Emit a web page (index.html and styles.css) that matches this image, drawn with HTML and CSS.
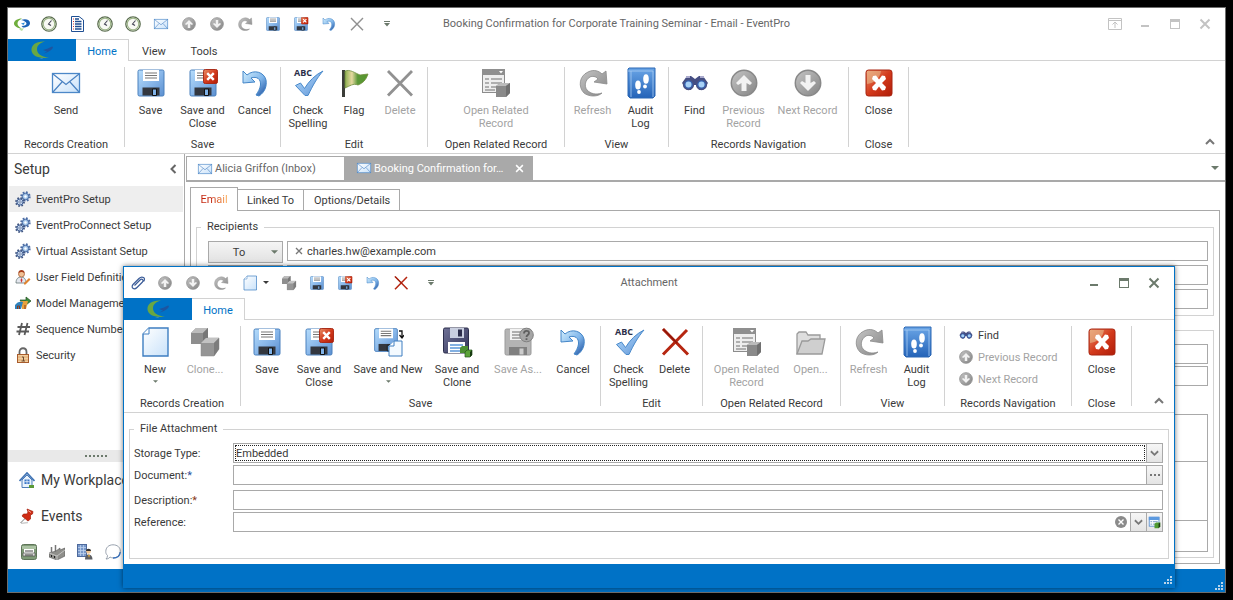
FILE: index.html
```
<!DOCTYPE html>
<html lang="en">
<head>
<meta charset="utf-8">
<title>EventPro</title>
<link rel="stylesheet" href="styles.css">
</head>
<body>
<svg class="sprite" width="0" height="0" aria-hidden="true">
  <defs>
    <linearGradient id="gBlue" x1="0" y1="0" x2="1" y2="1"><stop offset="0" stop-color="#b5dcfb"/><stop offset=".5" stop-color="#8ab8ea"/><stop offset="1" stop-color="#5b8fd0"/></linearGradient>
    <linearGradient id="gPale" x1="0" y1="0" x2="1" y2="1"><stop offset="0" stop-color="#ffffff"/><stop offset="1" stop-color="#c9e2fa"/></linearGradient>
    <linearGradient id="gBook" x1="0" y1="0" x2="0" y2="1"><stop offset="0" stop-color="#6aa5e6"/><stop offset="1" stop-color="#2463b8"/></linearGradient>
    <linearGradient id="gRed" x1="0" y1="0" x2="1" y2="1"><stop offset="0" stop-color="#e9926a"/><stop offset=".5" stop-color="#d33a1c"/><stop offset="1" stop-color="#b01c08"/></linearGradient>
    <linearGradient id="gGray" x1="0" y1="0" x2="1" y2="1"><stop offset="0" stop-color="#c4c4c4"/><stop offset="1" stop-color="#858585"/></linearGradient>
    <linearGradient id="gUndo" x1="0" y1="0" x2="1" y2="1"><stop offset="0" stop-color="#d2eefd"/><stop offset=".55" stop-color="#7fb5ea"/><stop offset="1" stop-color="#1a4c9c"/></linearGradient>
    <linearGradient id="gFlag" x1="0" y1="0" x2="1" y2="0"><stop offset="0" stop-color="#8cae4f"/><stop offset=".3" stop-color="#e6d9a0"/><stop offset=".55" stop-color="#5c9838"/><stop offset="1" stop-color="#55962c"/></linearGradient>
    <linearGradient id="gDark" x1="0" y1="0" x2="1" y2="1"><stop offset="0" stop-color="#6f7196"/><stop offset="1" stop-color="#33355a"/></linearGradient>
  </defs>
  <symbol id="i-logo" viewBox="0 0 24 18"><path d="M15 .5C6 0 1 4 1.500 9.500S9 18 19 16.500C12 16 7 13 7 8.500S10 2 15 .5Z" fill="#69a743"/><path d="M13 9 18 7.500C20 6.500 21 5.500 22.500 5.500 24 7 21 10.500 13.500 12.500L17 10.500Z" fill="#1d55a0"/><path d="M9 17.500 14 16.500 12 18Z" fill="#3d8db8"/></symbol>
  <symbol id="i-globe" viewBox="0 0 16 16"><path d="M8 2.500C3 2.500 0 5 0 7.500S3 12 8 13C5 11 3.500 9.500 3.500 7.500S5 4 8 2.500Z" fill="#6fae3d"/><path d="M7 4C12 2 16 4 16 7s-3 4.500-7 4.500L7.500 10C11 10 12.500 9 12.500 7.500S10 4.500 7 4Z" fill="#1a62b5"/><path d="M7 7.500 11 6.500 9.500 9Z" fill="#2c8bd6"/><path d="M5 13.500 10 12 8 15Z" fill="#b8dba0"/></symbol>
  <symbol id="i-clock" viewBox="0 0 16 16"><circle cx="8" cy="8" r="7.200" fill="#fff" stroke="#5b6d50" stroke-width="1.300"/><circle cx="8" cy="8" r="5.800" fill="#f8f9f4" stroke="#9db588" stroke-width="1.200"/><path d="M10.500 4.500 7.500 8l2.500 1.500" fill="none" stroke="#445" stroke-width="1.100"/></symbol>
  <symbol id="i-list" viewBox="0 0 16 16"><path d="M2.500.5H10L14.500 4v11.500h-12Z" fill="#fff" stroke="#1f4f93"/><path d="M4 3h1M4 5.500h1M4 8h1M4 10.500h1M4 13h1" stroke="#c33"/><path d="M6 3h4M6 5.500h6.500M6 8h6.500M6 10.500h6.500M6 13h6.500" stroke="#1d4c91" stroke-width="1.300"/></symbol>
  <symbol id="i-mail" viewBox="0 0 32 24"><rect x="2.500" y="2.500" width="27" height="19" fill="url(#gPale)" stroke="#4c88c8" stroke-width="1.300"/><path d="M3 3 16 13.500 29 3M3 21 12 11M29 21 20 11" fill="none" stroke="#4a82c2" stroke-width="1.200"/></symbol>
  <symbol id="i-up" viewBox="0 0 32 32"><circle cx="16" cy="16" r="12.700" fill="url(#gGray)" stroke="#888" stroke-width="1.500"/><path d="M16 8 24 16 22 18l-3.500-2v8h-5v-8L10 18 8 16Z" fill="#f2f2f2"/></symbol>
  <symbol id="i-down" viewBox="0 0 32 32"><circle cx="16" cy="16" r="12.700" fill="url(#gGray)" stroke="#888" stroke-width="1.500"/><path d="M16 24 8 16 10 14l3.500 2V8h5v8l3.500-2 2 2Z" fill="#f2f2f2"/></symbol>
  <symbol id="i-refresh" viewBox="0 0 32 32"><path d="M25 26C21 30 12 30 7 26 1 20 2 9 11 5c6-3 11-1 14 2l4-3 1 13-13-2 4-3c-2-3-6-3-8-2-5 3-6 9-3 13 4 4 9 5 15 3Z" fill="url(#gGray)" stroke="#8a8a8a" stroke-width=".8"/></symbol>
  <symbol id="i-save" viewBox="0 0 32 32"><rect x="3" y="3" width="26" height="26" rx="1.500" fill="url(#gBlue)" stroke="#4a80bd"/><path d="M8 3h16v11H8Z" fill="#fff"/><path d="M10 6h12M10 8.500h12M10 11h12" stroke="#777" stroke-width="1.200"/><path d="M7.500 20.500h17v8h-17Z" fill="#33373f"/><path d="M17.500 22h4v6.500h-4Z" fill="#7fb2e8" stroke="#111"/></symbol>
  <symbol id="i-badge" viewBox="0 0 16 16"><rect x=".5" y=".5" width="15" height="15" rx="2" fill="url(#gRed)" stroke="#a82410"/><path d="m4.500 4.500 7 7m0-7-7 7" stroke="#fff" stroke-width="2.600"/></symbol>
  <symbol id="i-saveclose" viewBox="0 0 32 32"><use href="#i-save"/><use href="#i-badge" x="16" y="2" width="15" height="15"/></symbol>
  <symbol id="i-undo" viewBox="0 0 32 32"><path d="M4 4v12l12-1-4-4c6-2 10 1 9.500 7-.5 4-2.500 7-4.500 10l3 1c6-4 8-10 7-16C25 5 15 2 8 8Z" fill="url(#gUndo)" stroke="#4486c8"/></symbol>
  <symbol id="i-xgray" viewBox="0 0 32 32"><path d="M4 4 28 28.500M28 4 4 28.500" stroke="#919191" stroke-width="2.800"/></symbol>
  <symbol id="i-xred" viewBox="0 0 32 32"><path d="M4 3 29 28.500M28 4 4 28.500" stroke="#b62611" stroke-width="3"/><path d="M4 3 18 17" stroke="#8c1508" stroke-width="1.400"/></symbol>
  <symbol id="i-check" viewBox="0 0 32 32"><path d="M3.500 18.500l5-2.500 4 5.500C17 14 23 8 31 4c-6 7-10 14-15 24.500h-3Z" fill="url(#gBlue)" stroke="#4a8acb"/></symbol>
  <symbol id="i-flag" viewBox="0 0 32 32"><path d="M4 3h3v27H4Z" fill="#3b3d38"/><path d="M7 4c5-2 10 2 15 4 3 0 5-1 8-1-2 6-5 9-10 11-5-2-8 1-13 3Z" fill="url(#gFlag)" stroke="#6d8b3a" stroke-width=".8"/></symbol>
  <symbol id="i-related" viewBox="0 0 32 32"><rect x="2.500" y="2.500" width="22" height="23" fill="#eee" stroke="#8c8c8c"/><path d="M2 2h23v6H2Z" fill="#8f8f8f"/><path d="m19 4 4 0-2 2.500Z" fill="#fff"/><path d="M5 12h4M5 16h4M5 20h4M11 12h11M11 16h11M11 20h5M5 23h10" stroke="#9a9a9a" stroke-width="1.400"/><path d="m16 19 4-3h10v10l-4 4H16Z" fill="#8a8a8a"/><path d="m16 19 4-3h10l-4 3Z" fill="#bbb"/><path d="m26 19 4-3v10l-4 4Z" fill="#707070"/></symbol>
  <symbol id="i-book" viewBox="0 0 32 32"><path d="M4 1h26v28l-2 2H5l-2-2V2Z" fill="url(#gBook)" stroke="#2d69b5"/><path d="M3 4h25v26M6 4v26" fill="none" stroke="#a9cdf3" stroke-width=".8"/><ellipse cx="13" cy="18" rx="2.800" ry="4.600" fill="#fff"/><ellipse cx="21" cy="12" rx="2.800" ry="4.800" fill="#fff"/><circle cx="14" cy="25" r="1.900" fill="#fff"/><circle cx="20" cy="19.500" r="1.900" fill="#fff"/></symbol>
  <symbol id="i-find" viewBox="0 0 32 32"><path d="M8 9h4l4 3 4-3h4l5 7-5 7h-4l-2-5h-4l-2 5H8l-5-7Z" fill="#454e83"/><path d="M7 10h4M21 10h4" stroke="#aac" stroke-width="2"/><circle cx="9.500" cy="17.500" r="5" fill="#3562b0" stroke="#4a5080" stroke-width="1.300"/><circle cx="22.500" cy="17.500" r="5" fill="#3562b0" stroke="#4a5080" stroke-width="1.300"/><circle cx="9.500" cy="17.500" r="3" fill="#a8d1f6"/><circle cx="22.500" cy="17.500" r="3" fill="#a8d1f6"/></symbol>
  <symbol id="i-close" viewBox="0 0 32 32"><rect x="3" y="3" width="26" height="26" rx="2.500" fill="url(#gRed)" stroke="#a82410"/><path d="M4 4h14C17 12 11 16 4 17Z" fill="#e9bd8e" opacity=".6"/><path d="m10 9 3-.5 3 4 3-4 3 .5 1 3-4 4 4 4-1 3-3 .5-3-4-3 4-3-.5-1-3 4-4-4-4Z" fill="#fff"/></symbol>
  <symbol id="i-clip" viewBox="0 0 16 16"><path d="M4.500 10.500 10 5c2-2 4 0 2.500 2L7 12.500c-3 3-6.500 0-4-3L9 3.500c3-3 7.500-.5 4.500 3" fill="none" stroke="#3b5c98" stroke-width="1.200"/></symbol>
  <symbol id="i-new" viewBox="0 0 32 32"><path d="M10 2h19v28H4V8Z" fill="url(#gPale)" stroke="#3e7ec1" stroke-width="1.400"/><path d="M10 2v6H4" fill="#fff" stroke="#3e7ec1"/></symbol>
  <symbol id="i-clone" viewBox="0 0 32 32"><path d="m2 7 5-5h12v10l-5 6H2Z" fill="#8e8e8e"/><path d="m2 7 5-5h12l-5 5Z" fill="#bcbcbc"/><path d="m14 7 5-5v10l-5 6Z" fill="#777"/><path d="m12 17 5-5h13v11l-5 7H12Z" fill="#959595" stroke="#888" stroke-width=".5"/><path d="m12 17 5-5h13l-5 5Z" fill="#c2c2c2"/><path d="m25 17 5-5v11l-5 7Z" fill="#7c7c7c"/></symbol>
  <symbol id="i-savenew" viewBox="0 0 32 32"><use href="#i-save" x="0" y="0" width="28" height="28"/><path d="M22 15h8v15H17V20Z" fill="#f4faff" stroke="#3e7ec1"/><path d="M22 15v5h-5" fill="#fff" stroke="#3e7ec1"/><path d="M27 5h3v6M27.500 9l2.500 3 2-3" fill="none" stroke="#111" stroke-width="1.300"/></symbol>
  <symbol id="i-saveclone" viewBox="0 0 32 32"><rect x="2.500" y="2" width="25" height="25" rx="1.500" fill="url(#gDark)" stroke="#2c2e4c"/><path d="M9 2h14v10H9Z" fill="#c9cfe0"/><path d="M17 3.500h4v7h-4Z" fill="#2c2e4c"/><path d="M7 16h17v11H7Z" fill="#fff"/><path d="M9 19h13M9 22h13M9 25h12" stroke="#5b96d8" stroke-width="1.400"/><path d="m19 22 2-2h6v5l-2 2h-6Z" fill="#4c8f32"/><path d="m24 26 2-2h5v5l-2 2h-5Z" fill="#5ba339" stroke="#24531a" stroke-width=".7"/><path d="m29 26 2-2v5l-2 2Z" fill="#173a10"/></symbol>
  <symbol id="i-saveas" viewBox="0 0 32 32"><rect x="3" y="3" width="26" height="26" rx="1.500" fill="#b4b4b4" stroke="#9a9a9a"/><path d="M8 3h17v11H8Z" fill="#f3f3f3"/><path d="M10 6h10M10 9h10M10 12h10" stroke="#999" stroke-width="1.300"/><path d="M7 21h18v8H7Z" fill="#808080"/><path d="M17.500 22.500h4v6h-4Z" fill="#ccc"/><circle cx="24.500" cy="9" r="6.800" fill="#a5a5a5" stroke="#808080"/><path d="M22 7.500c0-3.500 5-3.500 5-.5 0 2-2.500 2-2.500 4m0 1.200v1.800" fill="none" stroke="#5f5f5f" stroke-width="1.800"/></symbol>
  <symbol id="i-folder" viewBox="0 0 32 32"><path d="M2 28V8l2-2h7l2 3h12v4" fill="#dedede" stroke="#9a9a9a" stroke-width="1.300"/><path d="M2 28 7 15h6l3-2h14l-3 15Z" fill="#cfcfcf" stroke="#9a9a9a" stroke-width="1.300"/></symbol>
  <symbol id="i-gears" viewBox="0 0 16 16"><circle cx="10.500" cy="5.500" r="4" fill="#b8d3ef" stroke="#4d6ca4" stroke-width="2.400" stroke-dasharray="1.600 1.542"/><circle cx="10.500" cy="5.500" r="3.200" fill="#a9caec" stroke="#42639c" stroke-width=".9"/><circle cx="10.500" cy="5.500" r="1.200" fill="#fff"/><circle cx="5" cy="11" r="3.800" fill="#b8d3ef" stroke="#43567f" stroke-width="2.200" stroke-dasharray="1.500 1.485"/><circle cx="5" cy="11" r="3" fill="#cbdcf0" stroke="#405b91" stroke-width=".9"/><circle cx="5" cy="11" r="1.200" fill="#fff" stroke="#405b91" stroke-width=".7"/></symbol>
  <symbol id="i-user" viewBox="0 0 16 16"><path d="M1 14c0-4 2-6 5-6s5 2 5 6Z" fill="#e4e7ee" stroke="#677" stroke-width=".8"/><circle cx="6.500" cy="5" r="3" fill="#f0c094" stroke="#a4552a" stroke-width=".7"/><path d="M3.500 4C3 0 10 0 9.500 4 7 2.500 6 3 3.500 4Z" fill="#a63d1b"/><path d="m6.500 9-1 2 1 3 1-3Z" fill="#c33"/><path d="m9 14 5-5 1.500 1.500-5 5H9Z" fill="#e0832f"/></symbol>
  <symbol id="i-model" viewBox="0 0 16 16"><path d="M5 5h6V2l5 4-5 4V8H7Z" fill="#3d8c3b" stroke="#1f4d1f" stroke-width=".7"/><path d="M6 6h7l-2 8H7Z" fill="#e8a13c"/><path d="M0 10c2-3 5-4 8-3L6 14H0Z" fill="#2e82bd"/><path d="M2.500 14v-3h2v3M10 10v4" stroke="#8a3a1c" fill="none"/></symbol>
  <symbol id="i-hash" viewBox="0 0 16 16"><path d="M7 2 4 14M12.500 2l-3 12M2.500 6H15M1.500 10.500H14" stroke="#5a5a5a" stroke-width="1.800"/></symbol>
  <symbol id="i-lock" viewBox="0 0 16 16"><path d="M4.500 8V5c0-5 7-5 7 0v3" fill="none" stroke="#666" stroke-width="1.800"/><rect x="2.500" y="7.500" width="11" height="8" fill="#f2cf9f" stroke="#a85c2c"/><path d="M3 10h10M3 13h10" stroke="#d99b5d" stroke-width=".8"/><path d="M7 10h1.500v4M6.500 14h3.500" fill="none" stroke="#6a4a30"/></symbol>
  <symbol id="i-house" viewBox="0 0 16 16"><path d="M3 8v7.500h10V8L8 3Z" fill="#eaf3fc" stroke="#4d7dba"/><path d="m.5 9 7.500-8 7.500 8" fill="none" stroke="#3f73b4" stroke-width="1.700"/><rect x="5.500" y="7.500" width="5" height="4.500" fill="#3b79c9"/><path d="M8 7.500V12M5.500 9.700h5" stroke="#fff" stroke-width=".7"/><path d="M10 13h5v3h-5Z" fill="#5b9a37"/></symbol>
  <symbol id="i-pin" viewBox="0 0 16 16"><path d="M2 15.500 9 14.500" stroke="#ccc" stroke-width="1.300"/><path d="m1.500 15 5-5" stroke="#777"/><path d="m8 1 6 2.500-.5 2.500-2 1v4L9 13 3 8l1.500-2h3.500l1-2Z" fill="#cf2c14" stroke="#a51d0a" stroke-width=".7"/><path d="m9 2.500 3 2" stroke="#f3a291"/></symbol>
  <symbol id="i-print" viewBox="0 0 16 16"><rect x=".5" y=".5" width="15" height="15" rx="2" fill="#7f9b77" stroke="#5e7458"/><path d="M1 2h14v3H1Z" fill="#acc3a4"/><path d="M3 5h10v4H3Z" fill="#fff"/><path d="M2 9h12v3H2Z" fill="#dedfdc" stroke="#444" stroke-width=".6"/><path d="M4 7h8M4 11h8" stroke="#444"/></symbol>
  <symbol id="i-factory" viewBox="0 0 16 16"><path d="M2.500 8V3M6.500 8V1" stroke="#777" stroke-width="1.500"/><path d="m0 9 7-2 4-3v2l5-2v8l-8 4-8-3Z" fill="#8f8f8b" stroke="#555" stroke-width=".6"/><path d="m0 9 8 3 8-6M8 12v4" fill="none" stroke="#cfcfcf" stroke-width=".8"/><path d="M2.500 11v2M5.500 12v2" stroke="#222"/></symbol>
  <symbol id="i-office" viewBox="0 0 16 16"><rect x=".5" y=".5" width="9" height="12" fill="#7898ca" stroke="#4d699c"/><path d="M1 3.500h8M1 6.500h8M1 9.500h8M3.500 1v11M6.500 1v11" stroke="#bdd1ee" stroke-width=".8"/><circle cx="11.500" cy="7.500" r="2.300" fill="#f0c594"/><path d="M9 7C9 4 14 4 14 7Z" fill="#333"/><path d="M8 15.500c0-4 2-5 3.500-5s4 1 4 5Z" fill="#5d5f64"/><path d="m11 11 1 3 1-3Z" fill="#d9a33a"/></symbol>
  <symbol id="i-bubble" viewBox="0 0 16 16"><path d="M8 .8c4.500 0 7.300 2.700 7.300 6.300S12.500 14 8.500 14c-1.500 0-2.500-.5-3.500-1-1 1.500-2.500 2-4 2 1-1 1.500-2 1.500-3.500C1 10 .8 9 .8 7.500.8 3.700 3.500.8 8 .8Z" fill="#fff" stroke="#8c96a4" stroke-width=".9"/><path d="M8 14c4.500 0 7-2.500 7.200-6" fill="none" stroke="#3a72bc" stroke-width="1.300"/></symbol>
  <symbol id="i-lookup" viewBox="0 0 16 16"><rect x="1.500" y="1.500" width="12" height="11" fill="#fff" stroke="#4b86cc"/><path d="M1 1h13v4H1Z" fill="#5c9ae0"/><path d="M3 7h2M3 10h2M6 7h6M6 10h6" stroke="#5c87b8"/><path d="M8 9.500 10 8h5v5l-2 2H8Z" fill="#4f9a31"/><path d="m13 9.500 2-1.500v5l-2 2Z" fill="#1e3b14"/></symbol>
  <symbol id="i-chev" viewBox="0 0 10 10"><path d="m1 2.500 4 4 4-4" fill="none" stroke="currentColor" stroke-width="2"/></symbol>
  <symbol id="i-chevup" viewBox="0 0 10 10"><path d="m1 7 4-4 4 4" fill="none" stroke="currentColor" stroke-width="2"/></symbol>
  <symbol id="i-chevleft" viewBox="0 0 10 12"><path d="M7.500 2 3.500 6l4 4" fill="none" stroke="currentColor" stroke-width="2"/></symbol>
  <symbol id="i-arrow" viewBox="0 0 8 4"><path d="M0 0h8L4 4Z" fill="currentColor"/></symbol>
  <symbol id="i-more" viewBox="0 0 6 6"><path d="M0 0h6v1H0ZM0 2h6L3 5.500Z" fill="currentColor"/></symbol>
  <symbol id="i-min" viewBox="0 0 12 12"><path d="M2 7h8v2H2Z" fill="currentColor"/></symbol>
  <symbol id="i-max" viewBox="0 0 12 12"><path d="M1 1h10v10H1Z M2 4v6h8V4Z" fill="currentColor" fill-rule="evenodd"/></symbol>
  <symbol id="i-x" viewBox="0 0 12 12"><path d="m1.500 1.500 9 9m0-9-9 9" stroke="currentColor" stroke-width="2"/></symbol>
  <symbol id="i-pop" viewBox="0 0 14 12"><path d="M.5.5h13v11H.5ZM.5 2.500h13M7 10V4.500M4.500 6.500 7 4l2.500 2.500" fill="none" stroke="currentColor"/></symbol>
  <symbol id="i-clear" viewBox="0 0 12 12"><circle cx="6" cy="6" r="6" fill="#8b8b8b"/><path d="m3.500 3.500 5 5m0-5-5 5" stroke="#fff" stroke-width="1.400"/></symbol>
  <symbol id="i-grip" viewBox="0 0 9 9"><path d="M6 0h2v2H6ZM3 3h2v2H3ZM6 3h2v2H6ZM0 6h2v2H0ZM3 6h2v2H3ZM6 6h2v2H6Z" fill="#b9d4ea"/></symbol>
</svg>

<main class="window">
  <header class="titlebar">
    <div class="quick">
      <button aria-label="EventPro"><svg><use href="#i-globe"/></svg></button>
      <button aria-label="Recent"><svg><use href="#i-clock"/></svg></button>
      <button aria-label="List"><svg><use href="#i-list"/></svg></button>
      <button aria-label="History"><svg><use href="#i-clock"/></svg></button>
      <button aria-label="Schedule"><svg><use href="#i-clock"/></svg></button>
      <button aria-label="Send"><svg><use href="#i-mail"/></svg></button>
      <button aria-label="Previous record"><svg><use href="#i-up"/></svg></button>
      <button aria-label="Next record"><svg><use href="#i-down"/></svg></button>
      <button aria-label="Refresh"><svg><use href="#i-refresh"/></svg></button>
      <button aria-label="Save"><svg><use href="#i-save"/></svg></button>
      <button aria-label="Save and close"><svg><use href="#i-saveclose"/></svg></button>
      <button aria-label="Cancel"><svg><use href="#i-undo"/></svg></button>
      <button aria-label="Delete"><svg><use href="#i-xgray"/></svg></button>
      <button class="more" aria-label="Customize"><svg><use href="#i-more"/></svg></button>
    </div>
    <h1 class="title">Booking Confirmation for Corporate Training Seminar - Email - EventPro</h1>
    <div class="controls faint">
      <button aria-label="Ribbon options"><svg class="pop"><use href="#i-pop"/></svg></button>
      <button aria-label="Minimize"><svg><use href="#i-min"/></svg></button>
      <button aria-label="Maximize"><svg><use href="#i-max"/></svg></button>
      <button aria-label="Close window"><svg><use href="#i-x"/></svg></button>
    </div>
  </header>
  <nav class="tabs">
    <button class="app" aria-label="Application menu"><svg><use href="#i-logo"/></svg></button>
    <button class="tab active">Home</button>
    <button class="tab">View</button>
    <button class="tab">Tools</button>
  </nav>
  <section class="ribbon">
    <div class="group w117"><div class="tools"><button class="tool w48"><svg><use href="#i-mail"/></svg>Send</button></div><span class="caption">Records Creation</span></div>
    <div class="group w156"><div class="tools">
      <button class="tool w52"><svg><use href="#i-save"/></svg>Save</button>
      <button class="tool w52"><svg><use href="#i-saveclose"/></svg>Save and Close</button>
      <button class="tool w52"><svg><use href="#i-undo"/></svg>Cancel</button>
    </div><span class="caption">Save</span></div>
    <div class="group w147"><div class="tools">
      <button class="tool w46"><svg viewBox="0 0 32 32"><use href="#i-check"/><text class="abc" x="2" y="9">ABC</text></svg>Check Spelling</button>
      <button class="tool w46"><svg><use href="#i-flag"/></svg>Flag</button>
      <button class="tool w46" disabled><svg><use href="#i-xgray"/></svg>Delete</button>
    </div><span class="caption">Edit</span></div>
    <div class="group w137"><div class="tools"><button class="tool w78" disabled><svg><use href="#i-related"/></svg>Open Related Record</button></div><span class="caption">Open Related Record</span></div>
    <div class="group w104"><div class="tools">
      <button class="tool w48" disabled><svg><use href="#i-refresh"/></svg>Refresh</button>
      <button class="tool w48"><svg><use href="#i-book"/></svg>Audit<br>Log</button>
    </div><span class="caption">View</span></div>
    <div class="group w180"><div class="tools">
      <button class="tool w40"><svg><use href="#i-find"/></svg>Find</button>
      <button class="tool w58" disabled><svg><use href="#i-up"/></svg>Previous Record</button>
      <button class="tool w70" disabled><svg><use href="#i-down"/></svg>Next Record</button>
    </div><span class="caption">Records Navigation</span></div>
    <div class="group w60"><div class="tools"><button class="tool w48"><svg><use href="#i-close"/></svg>Close</button></div><span class="caption">Close</span></div>
    <button class="collapse" aria-label="Collapse ribbon"><svg><use href="#i-chevup"/></svg></button>
  </section>

  <div class="workspace">
    <aside class="sidebar">
      <div class="side-head"><h2>Setup</h2><button aria-label="Collapse"><svg><use href="#i-chevleft"/></svg></button></div>
      <ul class="side-list">
        <li><a href="#" class="current"><svg><use href="#i-gears"/></svg>EventPro Setup</a></li>
        <li><a href="#"><svg><use href="#i-gears"/></svg>EventProConnect Setup</a></li>
        <li><a href="#"><svg><use href="#i-gears"/></svg>Virtual Assistant Setup</a></li>
        <li><a href="#"><svg><use href="#i-user"/></svg>User Field Definitions</a></li>
        <li><a href="#"><svg><use href="#i-model"/></svg>Model Management</a></li>
        <li><a href="#"><svg><use href="#i-hash"/></svg>Sequence Numbers</a></li>
        <li><a href="#"><svg><use href="#i-lock"/></svg>Security</a></li>
      </ul>
      <div class="splitter"><i></i><i></i><i></i><i></i><i></i><i></i></div>
      <a href="#" class="section-link"><svg><use href="#i-house"/></svg>My Workplace</a>
      <a href="#" class="section-link"><svg><use href="#i-pin"/></svg>Events</a>
      <div class="side-icons">
        <button aria-label="Equipment"><svg><use href="#i-print"/></svg></button>
        <button aria-label="Venues"><svg><use href="#i-factory"/></svg></button>
        <button aria-label="Accounts"><svg><use href="#i-office"/></svg></button>
        <button aria-label="Communications"><svg><use href="#i-bubble"/></svg></button>
      </div>
    </aside>
    <section class="content">
      <div class="doc-tabs">
        <button class="doc-tab inbox"><svg><use href="#i-mail"/></svg>Alicia Griffon (Inbox)</button>
        <button class="doc-tab open"><svg><use href="#i-mail"/></svg>Booking Confirmation for…<svg class="tab-x"><use href="#i-x"/></svg></button>
        <button class="tab-menu" aria-label="Open tabs"><svg><use href="#i-arrow"/></svg></button>
      </div>
      <div class="page">
        <div class="page-tabs">
          <button class="page-tab active"><span>Email</span></button>
          <button class="page-tab">Linked To</button>
          <button class="page-tab wide">Options/Details</button>
        </div>
        <div class="page-body">
          <fieldset class="box">
            <legend>Recipients</legend>
            <div class="rcpt"><button class="pick">To<svg><use href="#i-arrow"/></svg></button><label class="address"><svg><use href="#i-x"/></svg><input type="text" aria-label="To" value="charles.hw@example.com"></label></div>
            <div class="rcpt"><button class="pick">Cc<svg><use href="#i-arrow"/></svg></button><label class="address"><input type="text" aria-label="Cc"></label></div>
            <div class="rcpt"><button class="pick">Bcc<svg><use href="#i-arrow"/></svg></button><label class="address"><input type="text" aria-label="Bcc"></label></div>
          </fieldset>
          <fieldset class="box message">
            <input type="text" class="line" aria-label="Subject">
            <input type="text" class="line" aria-label="Attachments">
            <div class="editor"><div></div><div></div><div></div></div>
          </fieldset>
        </div>
      </div>
    </section>
  </div>
  <footer class="status"><svg><use href="#i-grip"/></svg></footer>
</main>

<section class="dialog" role="dialog" aria-label="Attachment">
  <header class="titlebar">
    <div class="quick">
      <button aria-label="Attachment"><svg><use href="#i-clip"/></svg></button>
      <button aria-label="Previous record"><svg><use href="#i-up"/></svg></button>
      <button aria-label="Next record"><svg><use href="#i-down"/></svg></button>
      <button aria-label="Refresh"><svg><use href="#i-refresh"/></svg></button>
      <button aria-label="New" class="split"><svg><use href="#i-new"/></svg><svg class="caret"><use href="#i-arrow"/></svg></button>
      <button aria-label="Clone"><svg><use href="#i-clone"/></svg></button>
      <button aria-label="Save"><svg><use href="#i-save"/></svg></button>
      <button aria-label="Save and close"><svg><use href="#i-saveclose"/></svg></button>
      <button aria-label="Cancel"><svg><use href="#i-undo"/></svg></button>
      <button aria-label="Delete"><svg><use href="#i-xred"/></svg></button>
      <button class="more" aria-label="Customize"><svg><use href="#i-more"/></svg></button>
    </div>
    <h2 class="title">Attachment</h2>
    <div class="controls">
      <button aria-label="Minimize"><svg><use href="#i-min"/></svg></button>
      <button aria-label="Maximize"><svg><use href="#i-max"/></svg></button>
      <button aria-label="Close window"><svg><use href="#i-x"/></svg></button>
    </div>
  </header>
  <nav class="tabs">
    <button class="app" aria-label="Application menu"><svg><use href="#i-logo"/></svg></button>
    <button class="tab active">Home</button>
  </nav>
  <div class="ribbon">
    <div class="group w117"><div class="tools left inset">
      <button class="tool w50"><svg><use href="#i-new"/></svg>New<svg class="drop"><use href="#i-arrow"/></svg></button>
      <button class="tool w50" disabled><svg><use href="#i-clone"/></svg>Clone...</button>
    </div><span class="caption">Records Creation</span></div>
    <div class="group w360"><div class="tools left">
      <button class="tool w52"><svg><use href="#i-save"/></svg>Save</button>
      <button class="tool w52"><svg><use href="#i-saveclose"/></svg>Save and Close</button>
      <button class="tool w86"><svg><use href="#i-savenew"/></svg>Save and New<svg class="drop"><use href="#i-arrow"/></svg></button>
      <button class="tool w52"><svg><use href="#i-saveclone"/></svg>Save and Clone</button>
      <button class="tool w70" disabled><svg><use href="#i-saveas"/></svg>Save As...</button>
      <button class="tool w40"><svg><use href="#i-undo"/></svg>Cancel</button>
    </div><span class="caption">Save</span></div>
    <div class="group w102"><div class="tools">
      <button class="tool w46"><svg viewBox="0 0 32 32"><use href="#i-check"/><text class="abc" x="2" y="9">ABC</text></svg>Check Spelling</button>
      <button class="tool w46"><svg><use href="#i-xred"/></svg>Delete</button>
    </div><span class="caption">Edit</span></div>
    <div class="group w138"><div class="tools">
      <button class="tool w78" disabled><svg><use href="#i-related"/></svg>Open Related Record</button>
      <button class="tool w50" disabled><svg><use href="#i-folder"/></svg>Open...</button>
    </div><span class="caption">Open Related Record</span></div>
    <div class="group w104"><div class="tools">
      <button class="tool w48" disabled><svg><use href="#i-refresh"/></svg>Refresh</button>
      <button class="tool w48"><svg><use href="#i-book"/></svg>Audit<br>Log</button>
    </div><span class="caption">View</span></div>
    <div class="group w127"><div class="small-tools">
      <button><svg><use href="#i-find"/></svg>Find</button>
      <button disabled><svg><use href="#i-up"/></svg>Previous Record</button>
      <button disabled><svg><use href="#i-down"/></svg>Next Record</button>
    </div><span class="caption">Records Navigation</span></div>
    <div class="group w60"><div class="tools"><button class="tool w48"><svg><use href="#i-close"/></svg>Close</button></div><span class="caption">Close</span></div>
    <button class="collapse" aria-label="Collapse ribbon"><svg><use href="#i-chevup"/></svg></button>
  </div>
  <form class="form">
    <fieldset class="box">
      <legend>File Attachment</legend>
      <div class="row"><label for="storage">Storage Type:</label>
        <div class="field"><select id="storage"><option>Embedded</option></select><span class="fbtn"><svg><use href="#i-chev"/></svg></span></div></div>
      <div class="row"><label for="doc">Document:<b class="req blue">*</b></label>
        <div class="field"><input id="doc" type="text"><button type="button" class="fbtn dots" aria-label="Browse"><i></i><i></i><i></i></button></div></div>
      <div class="row spaced"><label for="desc">Description:<b class="req">*</b></label>
        <div class="field"><input id="desc" type="text"></div></div>
      <div class="row"><label for="ref">Reference:</label>
        <div class="field"><input id="ref" type="text"><button type="button" class="clear" aria-label="Clear"><svg><use href="#i-clear"/></svg></button><button type="button" class="fbtn" aria-label="Show list"><svg><use href="#i-chev"/></svg></button><button type="button" class="fbtn" aria-label="Look up"><svg class="look"><use href="#i-lookup"/></svg></button></div></div>
    </fieldset>
  </form>
  <footer class="status"><svg><use href="#i-grip"/></svg></footer>
</section>
</body>
</html>
```
FILE: styles.css
```
* { box-sizing: border-box; }

:root {
  --blue: #0072c6;
  --ink: #3a3a3a;
  --line: #d2d2d2;
  --edge: #a9a9a9;
  --green-gray: #6c7a6c;
}

body {
  margin: 0;
  height: 100vh;
  padding: 7px;
  background: #000;
  color: var(--ink);
  font: 11px/13px Roboto, "Liberation Sans", sans-serif;
  display: flex;
}

button, input, select {
  font: inherit;
  color: inherit;
  margin: 0;
  padding: 0;
  border: 0;
  background: none;
  min-width: 0;
}

svg { display: block; flex: none; }
h1, h2 { margin: 0; font-weight: 400; }
a { color: inherit; text-decoration: none; }
.sprite { position: absolute; }

.window {
  flex: 1;
  min-width: 0;
  display: flex;
  flex-direction: column;
  background: #fff;
  border: 1px solid #6e6e6e;
}

/* Title bar */
.titlebar {
  display: grid;
  grid-template-columns: 1fr auto 1fr;
  align-items: center;
  height: 31px;
}
.quick { display: flex; align-items: center; }
.quick button { width: 28px; display: flex; align-items: center; justify-content: center; }
.quick button:first-child { width: 27px; }
.quick svg { width: 16px; height: 16px; }
.quick .more { width: 32px; color: var(--green-gray); }
.quick .more svg { width: 6px; height: 6px; }
.quick .split { width: 40px; gap: 5px; }
.quick .split .caret { width: 6px; height: 3px; }
.title { font-size: 11px; color: #666; }
.controls { display: flex; justify-content: flex-end; padding-right: 5px; color: var(--green-gray); }
.controls.faint { color: #c3c3c3; }
.controls button { width: 30px; height: 20px; display: flex; align-items: center; justify-content: center; }
.controls svg { width: 12px; height: 12px; }
.controls .pop { width: 14px; }

/* Ribbon */
.tabs { display: flex; height: 22px; }
.tabs::after { content: ""; flex: 1; border-bottom: 1px solid var(--line); }
.app { width: 68px; background: var(--blue); display: flex; align-items: center; justify-content: center; }
.app svg { width: 24px; height: 18px; }
.tab { width: 50px; padding-top: 3px; border-bottom: 1px solid var(--line); }
.tab.active { width: 53px; padding-top: 1px; color: var(--blue); border: 1px solid var(--line); border-width: 1px 1px 0 0; }

.ribbon { display: flex; height: 93px; padding: 6px 0; border-bottom: 1px solid var(--line); }
.group {
  display: flex;
  flex-direction: column;
  align-items: center;
  justify-content: space-between;
  border-right: 1px solid var(--line);
}
.tools { display: flex; }
.tools.left { align-self: flex-start; }
.tools.inset { padding-left: 6px; }
.tool { display: flex; flex-direction: column; align-items: center; line-height: 13px; }
.tool svg { width: 32px; height: 32px; margin-bottom: 5px; }
.tool .drop { width: 5px; height: 3px; margin: 4px 0 0; color: var(--green-gray); }
.abc { font: 700 9px "Open Sans", sans-serif; fill: #2c2f4a; }
:disabled { color: #a3a3a3; }
.caption { line-height: 13px; margin-bottom: -4px; }
.small-tools { display: flex; flex-direction: column; gap: 4px; align-self: flex-start; padding-left: 13px; }
.small-tools button { height: 18px; display: flex; align-items: center; gap: 4px; }
.small-tools svg { width: 16px; height: 16px; }
.collapse { margin-left: auto; align-self: flex-end; padding: 0 10px 0 0; color: #777; }
.collapse svg { width: 10px; height: 10px; }

.w40 { width: 40px; }
.w46 { width: 46px; }
.w48 { width: 48px; }
.w50 { width: 50px; }
.w52 { width: 52px; }
.w58 { width: 58px; }
.w60 { width: 60px; }
.w70 { width: 70px; }
.w78 { width: 78px; }
.w86 { width: 86px; }
.w102 { width: 102px; }
.w104 { width: 104px; }
.w117 { width: 117px; }
.w127 { width: 127px; }
.w137 { width: 137px; }
.w138 { width: 138px; }
.w147 { width: 147px; }
.w156 { width: 156px; }
.w180 { width: 180px; }
.w360 { width: 360px; }

/* Sidebar */
.workspace { flex: 1; display: flex; min-height: 0; }
.sidebar { width: 177px; display: flex; flex-direction: column; border-right: 1px solid var(--edge); }
.side-head { height: 32px; display: flex; align-items: center; justify-content: space-between; padding: 0 6px 2px; }
.side-head h2 { font-size: 14px; line-height: 20px; }
.side-head svg { width: 10px; height: 12px; color: #666; }
.side-list { list-style: none; margin: 0; padding: 0 1px; flex: 1; }
.side-list a { height: 26px; display: flex; align-items: center; gap: 5px; padding-left: 6px; white-space: nowrap; }
.side-list svg { width: 16px; height: 16px; }
.side-list .current { background: #eee; }
.splitter { height: 12px; background: #e9e9e9; display: flex; align-items: center; justify-content: center; gap: 2px; }
.splitter i { width: 2px; height: 2px; background: var(--green-gray); }
.section-link { height: 36px; display: flex; align-items: center; gap: 6px; padding-left: 11px; font-size: 14px; white-space: nowrap; }
.section-link svg { width: 16px; height: 16px; }
.side-icons { height: 35px; display: flex; align-items: center; gap: 12px; padding-left: 13px; }
.side-icons svg { width: 16px; height: 16px; }

/* Documents */
.content { flex: 1; min-width: 0; display: flex; flex-direction: column; padding: 2px 0 5px 1px; }
.doc-tabs { display: flex; height: 26px; border-bottom: 2px solid var(--edge); }
.doc-tab { display: flex; align-items: center; gap: 2px; padding-left: 10px; color: #666; }
.doc-tab svg { width: 16px; height: 12px; }
.inbox { width: 158px; border: 1px solid var(--edge); border-width: 1px 0 0 1px; }
.open { width: 189px; padding: 0 9px 0 12px; background: var(--edge); color: #fff; }
.doc-tab .tab-x { width: 9px; height: 9px; margin-left: auto; }
.tab-menu { margin-left: auto; padding-right: 6px; align-self: center; color: var(--green-gray); }
.tab-menu svg { width: 8px; height: 4px; }

.page { flex: 1; display: flex; flex-direction: column; padding: 5px 5px 0 4px; }
.page-tabs { display: flex; align-items: flex-end; height: 24px; }
.page-tabs::after { content: ""; flex: 1; border-bottom: 1px solid var(--edge); }
.page-tab { height: 22px; padding: 0 9px; border: 1px solid var(--edge); border-left: 0; }
.page-tab.wide { padding: 0 9px 0 10px; }
.page-tab.active { width: 48px; height: 24px; border-left: 1px solid var(--edge); border-bottom: 0; }
.page-tab.active span { background: linear-gradient(90deg, #c4250c 40%, #ffb45e); background-clip: text; -webkit-background-clip: text; color: transparent; }
.page-body { flex: 1; display: flex; flex-direction: column; gap: 14px; padding: 9px 5px 5px; border: 1px solid var(--edge); border-top: 0; }
.box { margin: 0; min-width: 0; border: 1px solid var(--line); padding: 7px 5px; }
.box legend { padding: 0 6px; line-height: 14px; }
.page-body .box { padding: 7px 5px 6px 11px; }
.page-body .box legend { margin-left: -7px; }
.rcpt { display: flex; gap: 4px; height: 20px; margin-bottom: 4px; }
.rcpt:last-child { margin-bottom: 0; }
.pick { width: 75px; height: 22px; display: flex; align-items: center; justify-content: center; gap: 26px; padding-left: 20px; background: linear-gradient(#f5f5f5, #e2e2e2); border: 1px solid var(--edge); }
.pick svg { width: 7px; height: 4px; color: var(--green-gray); }
.address { flex: 1; display: flex; align-items: center; gap: 4px; padding-left: 7px; border: 1px solid var(--edge); }
.address svg { width: 8px; height: 8px; color: #777; }
.address input { flex: 1; }
.page-body .message { flex: 1; display: flex; flex-direction: column; padding: 13px 5px 5px 11px; }
.line { height: 20px; margin-bottom: 2px; border: 1px solid var(--edge); }
.editor { flex: 1; margin-top: 26px; display: grid; grid-template-rows: 46px 1fr 31px; border: 1px solid var(--edge); }
.editor div + div { border-top: 1px solid var(--edge); }

.status { height: 23px; background: var(--blue); display: flex; align-items: flex-end; justify-content: flex-end; padding: 0 1px 1px; }
.status svg { width: 9px; height: 9px; }

/* Attachment window floating over the main one */
.dialog {
  position: absolute;
  left: 123px;
  right: 58px;
  top: 266px;
  bottom: 12px;
  display: flex;
  flex-direction: column;
  background: #fff;
  border: 1px solid var(--blue);
  box-shadow: 0 0 5px rgba(0, 0, 0, .55);
}
.form { flex: 1; display: flex; padding: 9px 5px 5px; }
.form .box { flex: 1; padding: 7px 5px 0 4px; }
.row { display: flex; align-items: center; height: 20px; margin-bottom: 2px; }
.row.spaced { margin-top: 5px; }
.row label { width: 99px; }
.req { font-weight: 400; color: #8b3a1c; }
.req.blue { color: #2b4f9c; }
.field { flex: 1; height: 20px; display: flex; border: 1px solid var(--edge); }
.field input { flex: 1; }
.field select { flex: 1; appearance: none; margin: 1px; border: 1px dotted #222; outline: 0; }
.fbtn { width: 16px; display: flex; align-items: center; justify-content: center; gap: 2px; border-left: 1px solid var(--edge); background: linear-gradient(#f6f6f6, #e4e4e4); color: #777; }
.fbtn svg { width: 9px; height: 9px; }
.fbtn .look { width: 13px; height: 13px; }
.fbtn i { width: 2px; height: 2px; background: #777; }
.clear { width: 18px; display: flex; align-items: center; justify-content: center; }
.clear svg { width: 12px; height: 12px; }
.dialog .status { padding: 0 1px 2px; }
```
